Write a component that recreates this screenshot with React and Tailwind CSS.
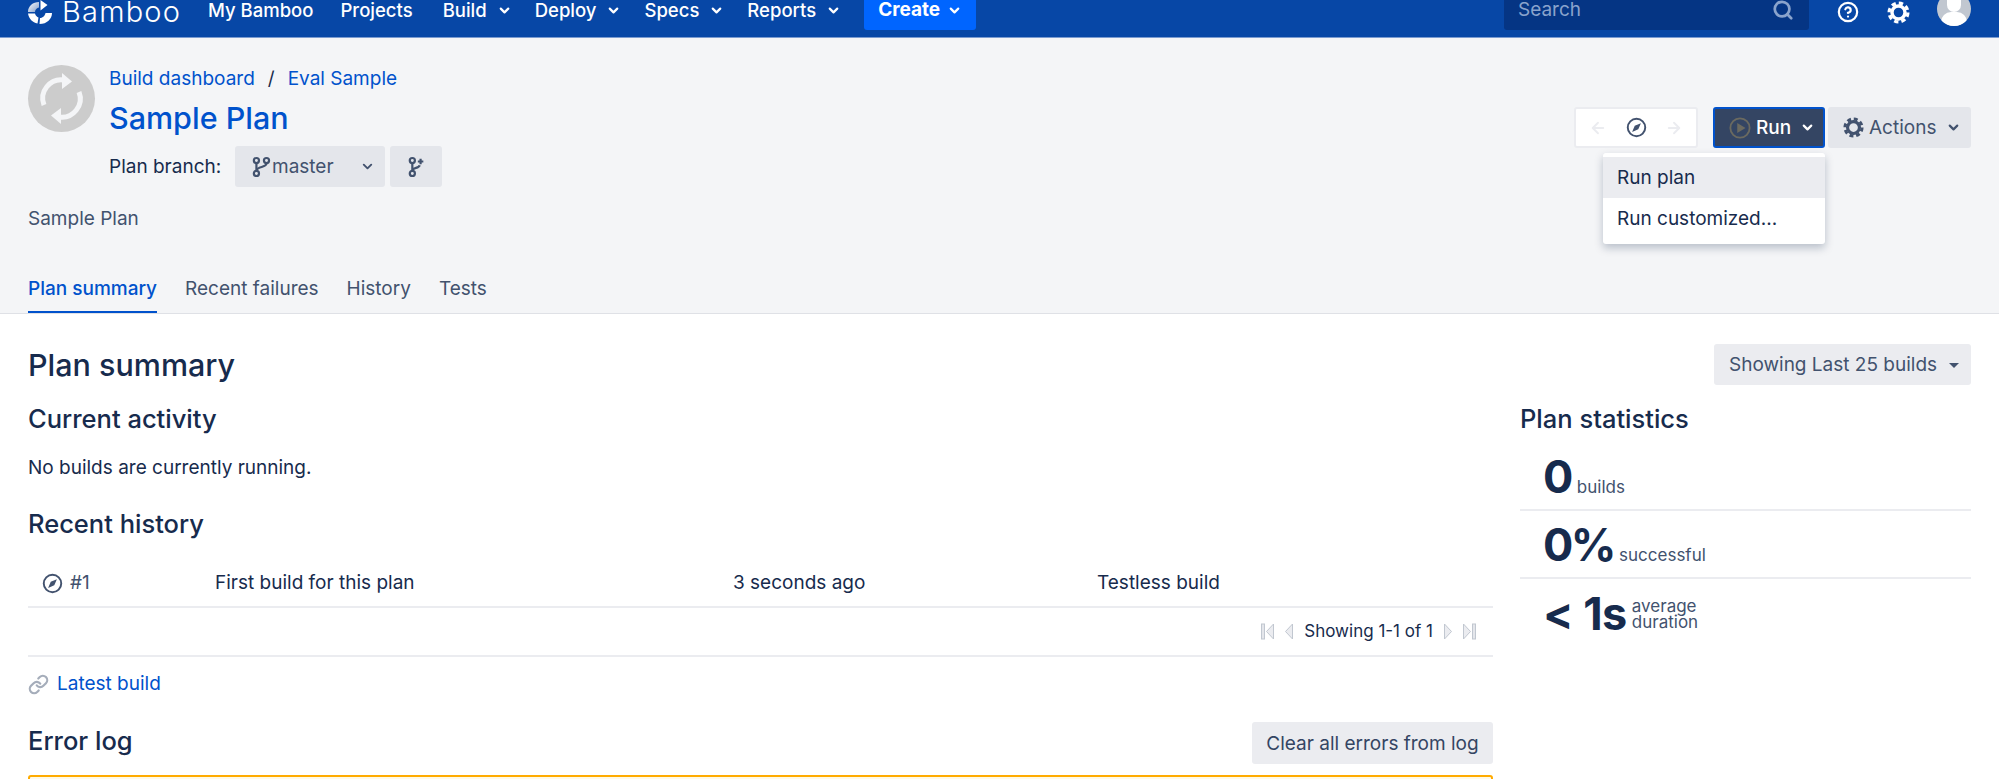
import { ChevronDown, Search, CircleHelp, ArrowLeft, ArrowRight, Link } from 'lucide-react'

// Little gauge used for the "not built" status
function BuildDial({ size = 22, className = '' }) {
  return (
    <svg width={size} height={size} viewBox="0 0 24 24" fill="none" className={className}>
      <circle cx="12" cy="12" r="10" stroke="currentColor" strokeWidth="2.200" />
      <path d="M7 17 L10 10 L17 7 L14 14 Z" fill="currentColor" />
    </svg>
  )
}

function Cog({ size = 22, className = '' }) {
  return (
    <svg width={size} height={size} viewBox="0 0 24 24" fill="none" className={className}>
      <circle cx="12" cy="12" r="6.800" stroke="currentColor" strokeWidth="3.600" />
      <circle cx="12" cy="12" r="9.800" stroke="currentColor" strokeWidth="3.400" strokeDasharray="4.500 3.200" />
    </svg>
  )
}

function BranchIcon({ size = 22, className = '' }) {
  return (
    <svg width={size} height={size} viewBox="0 0 24 24" fill="none" stroke="currentColor" strokeWidth="2.400" className={className}>
      <circle cx="7" cy="5" r="2.800" />
      <circle cx="18" cy="5" r="2.800" />
      <circle cx="7" cy="19" r="2.800" />
      <path d="M7 8 V16 M18 8 C18 13 8 11 7 16" />
    </svg>
  )
}

function NewBranchIcon({ size = 22, className = '' }) {
  return (
    <svg width={size} height={size} viewBox="0 0 24 24" fill="none" stroke="currentColor" strokeWidth="2.400" className={className}>
      <circle cx="8" cy="5" r="2.800" />
      <circle cx="8" cy="19" r="2.800" />
      <path d="M8 8 V16 M8 16 C9 12 15 14 16 10 M17 3 V9 M14 6 H20" />
    </svg>
  )
}

function BambooLogo() {
  return (
    <svg width="24" height="24" viewBox="0 0 24 24" className="shrink-0">
      <defs>
        <linearGradient id="bamboo-fade" x1="0" y1="0" x2="1" y2="1">
          <stop offset="0" stopColor="#ffffff" />
          <stop offset="1" stopColor="#7f9cc9" />
        </linearGradient>
      </defs>
      <path d="M11 2 C5 2 0 6 0 12 L7 12 C7 9.500 9 8 11 7.500 Z" fill="url(#bamboo-fade)" />
      <path d="M12.500 0 L12.500 10.500 L19.500 5 Z" fill="#ffffff" />
      <path d="M0 13.500 L7 13.500 C7.500 15.500 9 17 10.500 17.500 L9.500 23.500 C4.500 22.500 1 19 0 13.500 Z" fill="#ffffff" />
      <path d="M12 18 C15 18 17 15.500 17.500 13 L24 13 C24 19 19 24 11.500 24 Z" fill="#ffffff" />
    </svg>
  )
}

function PlanAvatar() {
  return (
    <div className="w-[67px] h-[67px] rounded-full bg-[#cccccc] flex items-center justify-center shrink-0">
      <svg width="53" height="53" viewBox="0 0 53 53" fill="none">
        <path d="M9 33 A18.500 18.500 0 0 1 29 8" stroke="#f4f5f7" strokeWidth="5" />
        <path d="M27 1 L37 9.500 L27 17 Z" fill="#f4f5f7" />
        <path d="M44 20 A18.500 18.500 0 0 1 24 45" stroke="#f4f5f7" strokeWidth="5" />
        <path d="M26 36 L16 43.500 L26 52 Z" fill="#f4f5f7" />
      </svg>
    </div>
  )
}

function NavItem({ label, menu, className = '' }) {
  return (
    <div className={`flex items-center gap-[10px] text-white text-[18.500px] leading-[20px] font-medium ${className}`}>
      {label}
      {menu && <ChevronDown size={15} strokeWidth={3.5} />}
    </div>
  )
}

function PagerGlyph({ flip, bar }) {
  return (
    <svg width={bar ? 13 : 8} height="17" viewBox={bar ? '0 0 13 17' : '5 0 8 17'} className={flip ? 'scale-x-[-1]' : ''}>
      {bar && <rect x="0.500" y="1" width="3" height="15" fill="#e4e6eb" stroke="#c1c7d0" strokeWidth="1" />}
      <path d="M12.500 1 L12.500 16 L5.500 8.500 Z" fill="#ebecf0" stroke="#c1c7d0" strokeWidth="1" />
    </svg>
  )
}

function Stat({ value, label, last, numCls }) {
  return (
    <div className={`h-[68px] pl-[23px] flex items-center gap-[5px] ${last ? '' : 'border-b-2 border-[#ebecf0]'}`}>
      <span className={`text-[45px] leading-none font-bold text-[#172b4d] ${numCls}`}>{value}</span>
      {label}
    </div>
  )
}

const labelCls = 'text-[17px] leading-[16px] text-[#42526e] self-end mb-[14px]'

export default function App() {
  return (
    <div className="w-[1999px] h-[779px] overflow-hidden bg-white text-[#172b4d] text-[19px] font-['Inter',sans-serif]">
      {/* Top nav, cut off at the top of the window */}
      <header className="h-[38px] bg-[#0747a6] border-b border-[#7a9bd0] flex items-start pl-[28px] pr-[28px] overflow-hidden">
        <div className="h-[24px] flex items-center gap-[10px] w-[180px] shrink-0">
          <BambooLogo />
          <span className="text-[29px] leading-[22px] text-white font-light tracking-[1.200px]">Bamboo</span>
        </div>
        <nav className="h-[20px] flex items-center gap-[23px]">
          <NavItem label="My Bamboo" className="mr-[4px]" />
          <NavItem label="Projects" className="mr-[7px]" />
          <NavItem label="Build" menu />
          <NavItem label="Deploy" menu />
          <NavItem label="Specs" menu />
          <NavItem label="Reports" menu />
          <div className="h-[40px] shrink-0 px-[14px] bg-[#0065ff] rounded-[3px] flex items-center gap-[7px] text-white font-bold leading-[20px]">
            Create
            <ChevronDown size={15} strokeWidth={3.5} />
          </div>
        </nav>
        <div className="ml-auto h-[20px] flex items-center">
          <div className="w-[305px] h-[40px] shrink-0 bg-[#053584] rounded-[3px] flex items-center justify-between pl-[14px] pr-[15px] text-[#8aa3cc] leading-[20px]">
            <span>Search</span>
            <Search size={22} strokeWidth={3} />
          </div>
          <CircleHelp size={22} strokeWidth={2.4} className="text-white ml-[28px] mt-[4px]" />
          <Cog size={23} className="text-white ml-[28px] mt-[4px]" />
          <div className="w-[34px] h-[34px] shrink-0 rounded-full bg-[#c1c7d0] ml-[27px] -mt-[2px] overflow-hidden relative">
            <div className="absolute left-[10px] top-[2px] w-[14px] h-[18px] rounded-full bg-white" />
            <div className="absolute left-[4px] top-[20px] w-[26px] h-[20px] rounded-full bg-white" />
          </div>
        </div>
      </header>

      {/* Plan header */}
      <section className="h-[276px] bg-[#f4f5f7] border-b border-[#dfe1e6] relative px-[28px] flex flex-col">
        <div className="flex justify-between pt-[26px]">
          <div className="flex gap-[14px]">
            <div className="pt-[1px]"><PlanAvatar /></div>
            <div>
              <div className="h-[30px] flex items-center gap-[13px] text-[#0052cc]">
                <span>Build dashboard</span>
                <span className="text-[#172b4d]">/</span>
                <span>Eval Sample</span>
              </div>
              <h1 className="text-[30.500px] leading-[48px] text-[#0052cc] font-medium">Sample Plan</h1>
              <div className="flex items-center mt-[4px]">
                <span className="w-[126px] pt-[2px]">Plan branch:</span>
                <div className="w-[150px] h-[41px] bg-[#e4e6eb] rounded-[3px] flex items-center pl-[15px] pr-[10px] text-[#42526e]">
                  <BranchIcon size={22} className="shrink-0" />
                  <span className="pt-[2px]">master</span>
                  <ChevronDown size={15} strokeWidth={3} className="ml-auto" />
                </div>
                <div className="w-[52px] h-[41px] ml-[5px] bg-[#e4e6eb] rounded-[3px] flex items-center justify-center text-[#42526e]">
                  <NewBranchIcon size={22} />
                </div>
              </div>
            </div>
          </div>
          <div className="flex items-start pt-[43px]">
            <div className="w-[124px] h-[41px] bg-white border-2 border-[#ebecf0] rounded-[3px] flex items-center justify-between px-[13px]">
              <ArrowLeft size={18} strokeWidth={2.5} className="text-[#ebecf0]" />
              <BuildDial size={21} className="text-[#42526e]" />
              <ArrowRight size={18} strokeWidth={2.5} className="text-[#ebecf0]" />
            </div>
            <div className="w-[112px] h-[41px] ml-[15px] bg-[#344563] border-2 border-[#0052cc] rounded-[3px] flex items-center pl-[14px] text-white font-medium">
              <svg width="22" height="22" viewBox="0 0 24 24" fill="none" className="text-[#6b6a60]">
                <circle cx="12" cy="12" r="10.500" stroke="currentColor" strokeWidth="2" />
                <path d="M9 6.500 L18 12 L9 17.500 Z" fill="currentColor" />
              </svg>
              <span className="ml-[5px] pt-[2px]">Run</span>
              <ChevronDown size={15} strokeWidth={3.5} className="ml-[9px]" />
            </div>
            <div className="w-[143px] h-[41px] ml-[3px] bg-[#e4e6eb] rounded-[3px] flex items-center pl-[15px] text-[#42526e]">
              <Cog size={21} />
              <span className="ml-[5px] pt-[2px]">Actions</span>
              <ChevronDown size={15} strokeWidth={3.5} className="ml-[10px]" />
            </div>
          </div>
        </div>
        <p className="mt-[18px] text-[#42526e]">Sample Plan</p>
        <div className="mt-auto flex gap-[28px] text-[#42526e]">
          <div className="h-[38px] flex items-start text-[#0052cc] border-b-2 border-[#0052cc] font-medium">Plan summary</div>
          <div>Recent failures</div>
          <div>History</div>
          <div>Tests</div>
        </div>

        {/* Run menu */}
        <div className="absolute left-[1603px] top-[115px] w-[222px] h-[91px] bg-white rounded-[3px] shadow-[0_4px_8px_rgba(9,30,66,0.25)] py-[4px]">
          <div className="h-[41px] bg-[#ebecf0] pl-[14px] pt-[2px] flex items-center">Run plan</div>
          <div className="h-[41px] pl-[14px] pt-[2px] flex items-center">Run customized...</div>
        </div>
      </section>

      {/* Content */}
      <main className="flex gap-[27px] px-[28px]">
        <div className="w-[1465px]">
          <h2 className="text-[30.500px] leading-[40px] font-medium mt-[31px]">Plan summary</h2>
          <h3 className="text-[25.500px] leading-[30px] font-medium mt-[19px]">Current activity</h3>
          <p className="leading-[24px] mt-[22px]">No builds are currently running.</p>
          <h3 className="text-[25.500px] leading-[30px] font-medium mt-[29px]">Recent history</h3>
          <div className="h-[51px] mt-[18px] pt-[3px] flex items-center border-b-2 border-[#ebecf0]">
            <div className="w-[187px] pl-[14px] flex items-center gap-[7px] text-[#42526e]">
              <BuildDial size={21} />
              #1
            </div>
            <div className="w-[518px]">First build for this plan</div>
            <div className="w-[364px]">3 seconds ago</div>
            <div>Testless build</div>
          </div>
          <div className="h-[49px] flex items-center justify-end gap-[11px] border-b-2 border-[#ebecf0] text-[17px] pr-[17px]">
            <PagerGlyph bar />
            <PagerGlyph />
            <span>Showing 1-1 of 1</span>
            <PagerGlyph flip />
            <PagerGlyph flip bar />
          </div>
          <div className="flex items-center gap-[8px] mt-[14px] h-[26px]">
            <Link size={21} strokeWidth={2.5} className="text-[#a5adba]" />
            <span className="text-[#0052cc]">Latest build</span>
          </div>
          <div className="flex items-center justify-between mt-[25px] h-[42px]">
            <h3 className="text-[25.500px] font-medium -mt-[4px]">Error log</h3>
            <div className="w-[241px] h-[42px] pt-[2px] bg-[#ebecf0] rounded-[3px] flex items-center justify-center text-[#344563]">Clear all errors from log</div>
          </div>
          <div className="h-[40px] mt-[11px] border-2 border-[#ffab00] rounded-[3px] bg-[#fffae6]" />
        </div>

        <div className="flex-1">
          <div className="flex justify-end mt-[30px]">
            <div className="w-[257px] h-[41px] pt-[2px] bg-[#ebecf0] rounded-[3px] flex items-center pl-[15px] text-[#42526e]">
              Showing Last 25 builds
              <span className="ml-[12px] w-0 h-0 border-x-[5px] border-t-[5px] border-x-transparent border-t-[#42526e]" />
            </div>
          </div>
          <h3 className="text-[25.500px] leading-[30px] font-medium mt-[19px]">Plan statistics</h3>
          <div className="mt-[9px]">
            <Stat value="0" numCls="tracking-[-1.500px]" label={<span className={labelCls}>builds</span>} />
            <Stat value="0%" numCls="tracking-[-2.500px]" label={<span className={labelCls}>successful</span>} />
            <Stat value="< 1s" numCls="tracking-[-0.500px]" last label={<span className="text-[17px] leading-[16px] pt-[2px] text-[#42526e]">average<br />duration</span>} />
          </div>
        </div>
      </main>
    </div>
  )
}
